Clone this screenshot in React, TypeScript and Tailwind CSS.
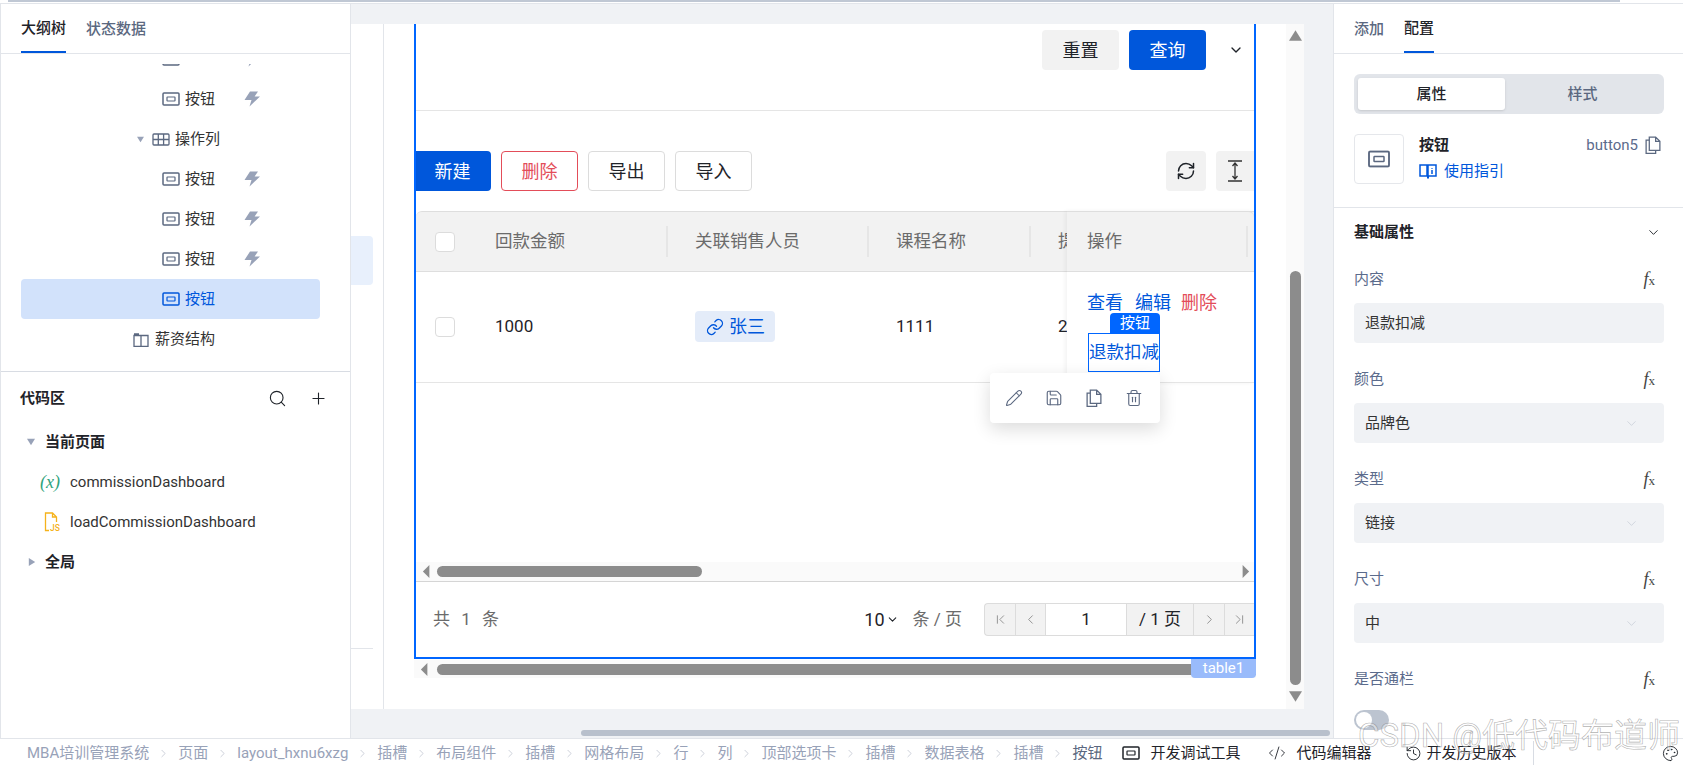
import { ChevronDown, ChevronRight, ChevronLeft, ChevronFirst, ChevronLast, Search, Plus, Pencil, Save, Trash2, RefreshCw, Link, History, Palette, CodeXml } from 'lucide-react'

const breadcrumb = ['MBA培训管理系统', '页面', 'layout_hxnu6xzg', '插槽', '布局组件', '插槽', '网格布局', '行', '列', '顶部选项卡', '插槽', '数据表格', '插槽']

function ButtonIcon({ className = 'text-[#5b6880]' }: { className?: string }) {
  return (
    <svg width="18" height="14" viewBox="0 0 18 14" fill="none" stroke="currentColor" className={className}>
      <rect x="1" y="1" width="16" height="12" rx="1" strokeWidth="1.5" />
      <rect x="5" y="5" width="8" height="4" rx="0.5" strokeWidth="1.2" />
    </svg>
  )
}

function Bolt() {
  return (
    <svg width="16" height="16" viewBox="0 0 16 16" className="text-[#98a2b8]" fill="currentColor">
      <path d="M6 0.5h8L10.6 5.5H16L5.5 15.5 7.5 9H0.5z" />
    </svg>
  )
}

function TableIcon() {
  return (
    <svg width="18" height="13" viewBox="0 0 18 13" fill="none" stroke="#5b6880" strokeWidth="1.3">
      <rect x="1" y="1" width="16" height="11" rx="1" />
      <path d="M1 6.5h16M6.3 1v11M11.6 1v11" />
    </svg>
  )
}

function ColumnsIcon() {
  return (
    <svg width="16" height="15" viewBox="0 0 16 15" fill="none" stroke="#5b6880" strokeWidth="1.3">
      <path d="M1 2h5M1 3.5h14v11H1zM8 3.5v11" />
    </svg>
  )
}

function Tri({ dir, className = 'text-[#98a2b8]', size = 7 }: { dir: 'up' | 'down' | 'left' | 'right'; className?: string; size?: number }) {
  const points = { up: '5,1 10,9 0,9', down: '0,1 10,1 5,9', left: '9,0 9,10 1,5', right: '1,0 1,10 9,5' }[dir]
  return (
    <svg width={size} height={size} viewBox="0 0 10 10" fill="currentColor" className={className}>
      <polygon points={points} />
    </svg>
  )
}

// scrollbar end arrows are narrower than the tree carets
function ScrollArrow({ dir }: { dir: 'left' | 'right' }) {
  return (
    <svg width="13" height="13" viewBox="0 0 10 10" fill="#8c8c8c">
      <polygon points={dir === 'left' ? '8,0 8,10 3,5' : '2,0 2,10 7,5'} />
    </svg>
  )
}

function CopyIcon({ size = 18 }: { size?: number }) {
  return (
    <svg width={size} height={size} viewBox="0 0 17 17" fill="none" stroke="#5b6880" strokeWidth="1.2">
      <path d="M5 1h6l4 4v8.5H5zM11 1v4h4" />
      <path d="M5 4H2v12.5h9v-3" />
    </svg>
  )
}

function BookIcon() {
  return (
    <svg width="18" height="16" viewBox="0 0 18 16" fill="none" stroke="#0057db" strokeWidth="1.5">
      <path d="M1 2h7v11H1zM9 2h8v11H9z" />
      <path d="M9 13v2.5" strokeWidth="2" />
      <path d="M13 5v.8M13 7v4" />
    </svg>
  )
}

function HeightIcon() {
  return (
    <svg width="18" height="22" viewBox="0 0 18 22" fill="none" stroke="#333" strokeWidth="1.3">
      <path d="M2 1h14M2 21h14M9 3v16M6.5 6 9 3l2.5 3M6.5 16 9 19l2.5-3" />
    </svg>
  )
}

function JsIcon() {
  return (
    <svg width="17" height="20" viewBox="0 0 17 20" fill="none" stroke="#f5b21b" strokeWidth="1.3">
      <path d="M5 18.5H1.5V1h7l4 4v5M8.5 1v4h4" />
      <text x="6" y="19" fontSize="8.5" fill="#f5b21b" stroke="none" fontFamily="Roboto" fontWeight="500">JS</text>
    </svg>
  )
}

function Fx() {
  return (
    <span className="[font-family:'Liberation_Serif',serif] text-[#444] mr-[9px] leading-none">
      <span className="italic text-[18px]">f</span>
      <span className="text-[13px]">x</span>
    </span>
  )
}

function TreeButton({ selected, clipped }: { selected?: boolean; clipped?: boolean }) {
  return (
    <div className={selected ? 'h-10 flex items-center ml-[20px] mr-[30px] pl-[141px] rounded bg-[#d2e2fb] text-[#0057db]' : 'h-10 flex items-center pl-[161px] text-[#333]'}>
      <ButtonIcon className={selected ? 'text-[#0057db]' : 'text-[#5b6880]'} />
      {clipped ? <span className="w-[34px]" /> : <span className="ml-[5px]">按钮</span>}
      {!selected && (
        <span className="ml-[29px] flex">
          <Bolt />
        </span>
      )}
    </div>
  )
}

function Field({ label, value, select }: { label: string; value: string; select?: boolean }) {
  return (
    <div className="h-[100px] pt-[13px]">
      <div className="flex justify-between items-center h-[20px] text-[#5b6b8c]">
        <span>{label}</span>
        <Fx />
      </div>
      <div className="mt-[14px] h-10 rounded bg-[#f0f2f5] px-[11px] flex items-center justify-between text-[#333]">
        <span>{value}</span>
        {select && <ChevronDown size={15} strokeWidth={1} className="text-[#bfc5d0] mr-[14px]" />}
      </div>
    </div>
  )
}

function Scrollbar() {
  return (
    <div className="h-[19px] bg-[#fafafa] flex items-center pl-[3px] pr-[1px]">
      <ScrollArrow dir="left" />
      <div className="ml-[5px] w-[265px] h-[11px] rounded-full bg-[#8c8c8c]" />
      <div className="flex-1" />
      <ScrollArrow dir="right" />
    </div>
  )
}

function HeadCell({ label, width }: { label: string; width: string }) {
  return (
    <div className={`${width} flex items-center justify-between shrink-0`}>
      <span>{label}</span>
      <span className="w-[2px] h-[31px] bg-[#e6e6e6] mr-[27px]" />
    </div>
  )
}

function Checkbox() {
  return <span className="block w-[20px] h-[20px] rounded-[4px] border border-[#dcdcdc] bg-white" />
}

function Toolbar() {
  return (
    <div className="absolute left-[-99px] top-[39px] w-[170px] h-[50px] bg-white rounded shadow-[0_6px_18px_rgba(0,0,0,0.14)] flex items-center pl-[15px] gap-[22px] text-[#5b6880] z-20">
      <Pencil size={18} strokeWidth={1.4} />
      <Save size={18} strokeWidth={1.5} />
      <CopyIcon />
      <Trash2 size={18} strokeWidth={1.5} />
    </div>
  )
}

export default function App() {
  return (
    <div className="relative w-[1683px] h-[767px] overflow-hidden flex flex-col bg-white text-[15px] [font-family:Roboto,'Noto_Sans_CJK_SC',sans-serif]">
      {/* top sliver */}
      <div className="h-[4px] shrink-0 border-b border-[#e2e5ea]">
        <div className="ml-[8px] w-[1612px] h-[2px] bg-[#c0c8d4]" />
      </div>

      <div className="flex flex-1 min-h-0">
        {/* left panel */}
        <aside className="w-[351px] shrink-0 flex flex-col border-l border-r border-[#e2e5ea]">
          <div className="h-[50px] shrink-0 flex gap-[20px] pl-[20px] border-b border-[#e2e5ea] font-medium">
            <div className="h-full pt-[1px] flex items-center border-b-2 border-[#0057db] text-[#1f2329]">大纲树</div>
            <div className="h-full pt-[1px] flex items-center text-[#5b6880]">状态数据</div>
          </div>
          <div className="h-[318px] shrink-0 pt-[10px] border-b border-[#d8dce3]">
            <div className="h-[307px] overflow-hidden">
              <div className="-mt-[25px]">
                <TreeButton clipped />
                <TreeButton />
                <div className="h-10 flex items-center pl-[136px] text-[#333]">
                  <Tri dir="down" />
                  <span className="ml-[8px] flex"><TableIcon /></span>
                  <span className="ml-[5px]">操作列</span>
                </div>
                <TreeButton />
                <TreeButton />
                <TreeButton />
                <TreeButton selected />
                <div className="h-10 flex items-center pl-[132px] text-[#333]">
                  <ColumnsIcon />
                  <span className="ml-[6px]">薪资结构</span>
                </div>
              </div>
            </div>
          </div>
          <div className="pt-[6px]">
            <div className="h-10 flex items-center justify-between pl-[19px] pr-[22px] font-bold text-[#1f2329]">
              <span>代码区</span>
              <div className="flex items-center gap-[22px]">
                <Search size={19} strokeWidth={1.4} />
                <Plus size={19} strokeWidth={1.4} />
              </div>
            </div>
            <div className="h-10 mt-[4px] flex items-center pl-[26px] font-bold text-[#1f2329]">
              <Tri dir="down" size={8} />
              <span className="ml-[10px]">当前页面</span>
            </div>
            <div className="h-10 flex items-center pl-[39px] text-[#333]">
              <span className="w-[30px] text-[#2fa37c] [font-family:'Liberation_Serif',serif] italic text-[18px]">(x)</span>
              <span>commissionDashboard</span>
            </div>
            <div className="h-10 flex items-center pl-[43px] text-[#333]">
              <span className="w-[26px] flex"><JsIcon /></span>
              <span>loadCommissionDashboard</span>
            </div>
            <div className="h-10 flex items-center pl-[27px] font-bold text-[#1f2329]">
              <Tri dir="right" size={8} />
              <span className="ml-[9px]">全局</span>
            </div>
          </div>
        </aside>

        {/* center */}
        <main className="w-[982px] shrink-0 flex flex-col bg-[#f0f2f5]">
          <div className="h-[20px] shrink-0" />
          <div className="h-[685px] shrink-0 flex">
            <div className="w-[953px] shrink-0 bg-white flex">
              <div className="w-[22px] shrink-0 flex flex-col border-r-0">
                <div className="mt-[212px] h-[49px] bg-[#e8f0fc] rounded-r-[4px]" />
                <div className="mt-[363px] h-px bg-[#e2e5ea]" />
              </div>
              <div className="ml-[10px] w-px bg-[#e2e5ea] shrink-0" />
              <div className="ml-[30px] w-[842px] shrink-0 relative">
                {/* selected table */}
                <div className="h-[635px] flex flex-col border-x-2 border-b-2 border-[#0066ff] text-[18px] text-[#1f2329]">
                  <div className="h-[87px] shrink-0 pt-[6px] flex justify-end pr-[10px] border-b border-[#e5e5e5]">
                    <div className="h-10 w-[77px] rounded bg-[#f2f2f2] flex items-center justify-center">重置</div>
                    <div className="ml-[10px] h-10 w-[77px] rounded bg-[#0057db] text-white flex items-center justify-center">查询</div>
                    <div className="ml-[22px] h-10 flex items-center"><ChevronDown size={16} strokeWidth={2} /></div>
                  </div>

                  <div className="mt-[40px] flex justify-between">
                    <div className="flex gap-[10px]">
                      <div className="h-10 w-[75px] pr-[2px] rounded-r bg-[#0057db] text-white flex items-center justify-center">新建</div>
                      <div className="h-10 w-[77px] rounded border border-[#e34d59] text-[#e34d59] flex items-center justify-center">删除</div>
                      <div className="h-10 w-[77px] rounded border border-[#dcdcdc] flex items-center justify-center">导出</div>
                      <div className="h-10 w-[77px] rounded border border-[#dcdcdc] flex items-center justify-center">导入</div>
                    </div>
                    <div className="flex gap-[10px]">
                      <div className="h-10 w-10 rounded bg-[#f2f2f2] flex items-center justify-center"><RefreshCw size={20} strokeWidth={1.8} /></div>
                      <div className="h-10 w-[38px] rounded-l bg-[#f2f2f2] flex items-center justify-center"><HeightIcon /></div>
                    </div>
                  </div>

                  <div className="relative mt-[20px] overflow-visible">
                    <div className="h-[61px] bg-[#f2f2f2] border-y border-[#dedede] rounded-tl-[6px] flex items-center text-[#6b6b6b] text-[17.5px]">
                      <div className="w-[79px] shrink-0 pl-[19px]"><Checkbox /></div>
                      <HeadCell label="回款金额" width="w-[200px]" />
                      <HeadCell label="关联销售人员" width="w-[201px]" />
                      <HeadCell label="课程名称" width="w-[162px]" />
                      <span>提</span>
                    </div>
                    <div className="h-[111px] border-b border-[#e5e5e5] flex items-center">
                      <div className="w-[79px] shrink-0 pl-[19px]"><Checkbox /></div>
                      <div className="w-[200px] shrink-0 text-[17px]">1000</div>
                      <div className="w-[201px] shrink-0">
                        <span className="inline-flex items-center w-[80px] h-[31px] rounded bg-[#e4ecf9] text-[#0057db] pl-[11px] gap-[5px]">
                          <Link size={18} strokeWidth={1.8} />
                          张三
                        </span>
                      </div>
                      <div className="w-[162px] shrink-0 text-[17px]">1111</div>
                      <div className="text-[17px]">2</div>
                    </div>

                    {/* fixed action column */}
                    <div className="absolute right-0 top-0 w-[187px] h-[172px] shadow-[-2px_0_4px_rgba(0,0,0,0.05)]">
                      <div className="h-[61px] bg-[#f2f2f2] border-y border-[#dedede] rounded-tr-[6px] flex items-center justify-between pl-[20px] text-[#6b6b6b] text-[17.5px]">
                        <span>操作</span>
                        <span className="w-[2px] h-[31px] bg-[#e6e6e6] mr-[6px]" />
                      </div>
                      <div className="h-[111px] bg-white border-b border-[#e5e5e5] pl-[20px] pt-[17px]">
                        <div className="flex gap-[12px] text-[#0057db]">
                          <span>查看</span>
                          <span>编辑</span>
                          <span className="-ml-[2px] text-[#e34d59]">删除</span>
                        </div>
                        <div className="relative mt-[17px] ml-[1px] w-[72px] h-[39px] border border-[#0066ff] text-[#0057db] flex items-center text-[17.5px] whitespace-nowrap">
                          退款扣减
                          <div className="absolute right-[-1px] top-[-21px] w-[50px] h-[20px] rounded-t bg-[#0066ff] text-white text-[15px] leading-[20px] text-center">按钮</div>
                          <Toolbar />
                        </div>
                      </div>
                    </div>
                  </div>

                  <div className="flex-1" />
                  <div className="border-b border-[#d5d5d5]"><Scrollbar /></div>

                  <div className="h-[75px] shrink-0 flex items-center pl-[17px] text-[#6b6b6b] text-[17px]">
                    <span className="tracking-[3.5px]">共 1 条</span>
                    <div className="flex-1" />
                    <span className="text-[#1f2329] text-[18px]">10</span>
                    <ChevronDown size={13} strokeWidth={2} className="text-[#1f2329] mx-[1px]" />
                    <span className="ml-[13px]">条 / 页</span>
                    <div className="ml-[22px] w-[270px] h-[33px] flex bg-[#f2f2f2] border border-r-0 border-[#dcdcdc] rounded-l text-[#888]">
                      <div className="w-[31px] flex items-center justify-center border-r border-[#dcdcdc]"><ChevronFirst size={15} strokeWidth={1.4} /></div>
                      <div className="w-[30px] flex items-center justify-center border-r border-[#dcdcdc]"><ChevronLeft size={15} strokeWidth={1.4} /></div>
                      <div className="w-[81px] bg-white flex items-center justify-center border-r border-[#dcdcdc] text-[#1f2329]">1</div>
                      <div className="w-[67px] flex items-center justify-center border-r border-[#dcdcdc] text-[#1f2329]">/ 1 页</div>
                      <div className="w-[31px] flex items-center justify-center border-r border-[#dcdcdc]"><ChevronRight size={15} strokeWidth={1.4} /></div>
                      <div className="flex-1 flex items-center justify-center"><ChevronLast size={15} strokeWidth={1.4} /></div>
                    </div>
                  </div>
                </div>

                {/* outer horizontal scrollbar */}
                <div className="h-[18px] mt-px bg-[#fafafa] flex items-center pl-[3px]">
                  <ScrollArrow dir="left" />
                  <div className="ml-[7px] flex-1 h-[11px] rounded-l-full bg-[#8c8c8c]" />
                </div>
                <div className="absolute right-0 top-[635px] w-[65px] h-[19px] rounded-b bg-[#99bbfb] text-white text-[15px] leading-[19px] text-center">table1</div>
              </div>
              <div className="flex-1" />
              {/* vertical scrollbar */}
              <div className="w-[18px] shrink-0 bg-[#fafafa] flex flex-col items-center">
                <div className="mt-[5px] flex"><Tri dir="up" size={13} className="text-[#8c8c8c]" /></div>
                <div className="mt-[229px] w-[11px] h-[414px] rounded-full bg-[#8c8c8c]" />
                <div className="mt-[5px] flex"><Tri dir="down" size={13} className="text-[#8c8c8c]" /></div>
              </div>
            </div>
          </div>
          <div className="flex-1 pt-[21px] pl-[230px]">
            <div className="w-[749px] h-[6px] rounded-full bg-[#b8c0cc]" />
          </div>
        </main>

        {/* right panel */}
        <aside className="w-[350px] shrink-0 border-l border-[#e2e5ea] flex flex-col overflow-hidden">
          <div className="h-[50px] shrink-0 flex gap-[20px] pl-[20px] border-b border-[#e2e5ea] font-medium">
            <div className="h-full pt-[1px] flex items-center text-[#5b6880]">添加</div>
            <div className="h-full pt-[1px] flex items-center border-b-2 border-[#0057db] text-[#1f2329]">配置</div>
          </div>
          <div className="px-[20px] pr-[19px] pt-[20px] h-[154px] shrink-0 border-b border-[#e2e5ea]">
            <div className="h-10 rounded-md bg-[#e2e5ea] p-[4px] flex font-medium">
              <div className="w-[147px] rounded-[3px] bg-white shadow-sm flex items-center justify-center text-[#1f2329]">属性</div>
              <div className="flex-1 flex items-center justify-center text-[#5b6880]">样式</div>
            </div>
            <div className="mt-[20px] flex">
              <div className="w-[50px] h-[50px] rounded border border-[#e5e7eb] flex items-center justify-center shrink-0">
                <ButtonIcon className="text-[#5b6880] scale-125" />
              </div>
              <div className="ml-[15px]">
                <div className="h-[22px] flex items-center font-bold text-[#1f2329]">按钮</div>
                <div className="mt-[4px] flex items-center gap-[7px] text-[#0057db]"><BookIcon />使用指引</div>
              </div>
              <div className="flex-1" />
              <div className="h-[22px] flex items-center gap-[6px] mr-[2px] text-[#5b6b8c]">button5 <CopyIcon /></div>
            </div>
          </div>
          <div className="px-[20px] pr-[19px]">
            <div className="h-[48px] flex items-center justify-between font-bold text-[#1f2329]">
              <span>基础属性</span>
              <ChevronDown size={15} strokeWidth={1.5} className="mr-[3px]" />
            </div>
            <div>
              <Field label="内容" value="退款扣减" />
              <Field label="颜色" value="品牌色" select />
              <Field label="类型" value="链接" select />
              <Field label="尺寸" value="中" select />
              <div className="pt-[13px]">
                <div className="flex justify-between items-center h-[20px] text-[#5b6b8c]">
                  <span>是否通栏</span>
                  <Fx />
                </div>
                <div className="mt-[21px] w-[35px] h-[20px] rounded-full bg-[#bcc4d0] p-[2px]">
                  <div className="w-[16px] h-[16px] rounded-full bg-white" />
                </div>
              </div>
            </div>
          </div>
        </aside>
      </div>

      {/* bottom bar */}
      <footer className="h-[29px] shrink-0 border-t border-[#e2e5ea] flex items-center pl-[27px] text-[#98a2b8] bg-white whitespace-nowrap">
        {breadcrumb.map((item, i) => (
          <span key={i} className="flex items-center shrink-0">
            <span>{item}</span>
            <ChevronRight size={13} strokeWidth={1.2} className="mx-[8px] text-[#b3bac8]" />
          </span>
        ))}
        <span className="text-[#5b6880] shrink-0">按钮</span>
        <div className="ml-[20px] flex items-center text-[#1f2329] shrink-0">
          <ButtonIcon className="text-[#1f2329]" />
          <span className="ml-[10px]">开发调试工具</span>
          <CodeXml size={18} strokeWidth={1.2} className="ml-[27px]" />
          <span className="ml-[11px]">代码编辑器</span>
          <History size={17} strokeWidth={1.3} className="ml-[33px]" />
          <span className="ml-[5px]">开发历史版本</span>
          <span className="ml-[16px] w-px h-[24px] bg-[#d8dce3]" />
          <Palette size={17} strokeWidth={1.3} className="ml-[128px]" />
        </div>
      </footer>

      {/* watermark */}
      <div className="absolute right-[3px] top-[714px] text-[33px] leading-[44px] whitespace-nowrap text-white/40 [-webkit-text-stroke:0.6px_rgba(120,120,120,0.6)] z-30">
        CSDN @低代码布道师
      </div>
    </div>
  )
}
